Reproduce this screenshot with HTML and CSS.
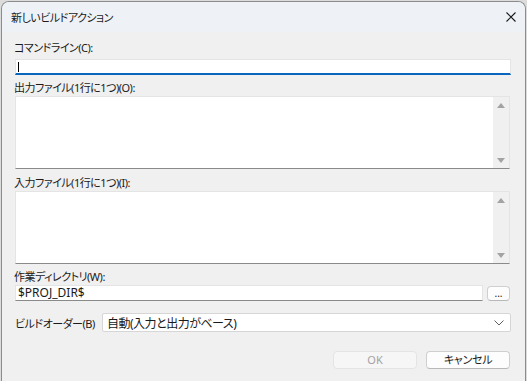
FILE: index.html
```html
<!DOCTYPE html>
<html lang="ja">
<head>
    <meta charset="UTF-8">
    <title>新しいビルドアクション</title>
    <link rel="stylesheet" href="styles.css">
</head>
<body>
    <div class="window">
        <div class="titlebar">
            <span class="title">新しいビルドアクション</span>
            <svg class="close" width="10" height="10" viewBox="0 0 10 10">
                <path d="M0.5 0.5 L9.5 9.5 M9.5 0.5 L0.5 9.5" stroke="#1a1a1a" stroke-width="1.1" fill="none"/>
            </svg>
        </div>

        <div class="form">
            <label class="lbl lbl-cmd">コマンドライン(C):</label>
            <div class="field focused"><span class="caret"></span></div>

            <label class="lbl lbl-out">出力ファイル(1行に1つ)(O):</label>
            <div class="area">
                <div class="scroll">
                    <span class="arrow up"></span>
                    <span class="arrow down"></span>
                </div>
            </div>

            <label class="lbl lbl-in">入力ファイル(1行に1つ)(I):</label>
            <div class="area">
                <div class="scroll">
                    <span class="arrow up"></span>
                    <span class="arrow down"></span>
                </div>
            </div>

            <label class="lbl lbl-dir">作業ディレクトリ(W):</label>
            <div class="dir-row">
                <div class="field dir">$PROJ_DIR$</div>
                <button class="btn browse">...</button>
            </div>

            <div class="order-row">
                <span class="order-lbl">ビルドオーダー(B)</span>
                <div class="select">
                    <span>自動(入力と出力がベース)</span>
                    <svg width="10" height="6" viewBox="0 0 10 6">
                        <path d="M0.5 0.5 L5 5 L9.5 0.5" stroke="#606060" stroke-width="1" fill="none"/>
                    </svg>
                </div>
            </div>

            <div class="buttons">
                <button class="btn ok" disabled>OK</button>
                <button class="btn cancel">キャンセル</button>
            </div>
        </div>
    </div>
</body>
</html>
```

FILE: styles.css
```css
html, body {
    margin: 0;
    height: 100%;
}
body {
    background: #dcdcdc;
    font-family: "Noto Sans", "Noto Sans CJK JP", sans-serif;
    font-size: 11px;
    font-feature-settings: "palt";
    color: #1a1a1a;
    overflow: hidden;
}
.window {
    margin: 1px 1px 0 1px;
    height: 380px;
    box-sizing: border-box;
    border: 1px solid #8c8c8c;
    border-bottom: none;
    border-radius: 8px 8px 0 0;
    background: #f0f0f0;
    overflow: hidden;
}
.titlebar {
    height: 30px;
    background: #eef2f7;
    display: flex;
    align-items: center;
    justify-content: space-between;
    padding: 0 9px 0 9px;
}
.title {
    font-size: 11px;
    letter-spacing: -0.5px;
}
.form {
    display: flex;
    flex-direction: column;
    padding: 0 14px 0 12px;
}
.lbl {
    line-height: 16px;
    height: 16px;
    white-space: nowrap;
    letter-spacing: -0.5px;
}
.lbl-cmd {
    margin-top: 8px;
    margin-bottom: 3px;
}
.lbl-out {
    margin-top: 5px;
}
.lbl-in {
    margin-top: 6px;
}
.lbl-dir {
    margin-top: 5px;
}
.field {
    height: 16px;
    box-sizing: border-box;
    background: #fff;
    border: 1px solid #e4e4e4;
    border-bottom: 1px solid #8a8a8a;
    margin-left: 1px;
    line-height: 14px;
    padding-left: 2px;
    font-size: 12px;
}
.field.focused {
    border-bottom: 2px solid #0a66bd;
    position: relative;
}
.caret {
    position: absolute;
    left: 2px;
    top: 2px;
    width: 1px;
    height: 10px;
    background: #000;
}
.area {
    height: 73px;
    box-sizing: border-box;
    margin: 0 1px 0 1px;
    background: #fff;
    border: 1px solid #e4e4e4;
    border-bottom: 1px solid #8a8a8a;
    display: flex;
    justify-content: flex-end;
}
.scroll {
    width: 16px;
    background: #f0f0f0;
    display: flex;
    flex-direction: column;
    justify-content: space-between;
    align-items: center;
    padding: 6px 0 5px;
}
.arrow {
    width: 0;
    height: 0;
    border-left: 4px solid transparent;
    border-right: 4px solid transparent;
}
.arrow.up {
    border-bottom: 5px solid #a3a3a3;
}
.arrow.down {
    border-top: 5px solid #a3a3a3;
}
.dir-row {
    display: flex;
    align-items: center;
    gap: 4px;
}
.field.dir {
    flex: 1;
    padding-left: 2px;
}
.btn {
    font-family: inherit;
    font-size: 11px;
    font-feature-settings: "palt";
    background: #fdfdfd;
    border: 1px solid #cfcfcf;
    border-bottom-color: #b8b8b8;
    border-radius: 4px;
    padding: 0;
    color: #1a1a1a;
}
.browse {
    width: 23px;
    height: 15px;
    line-height: 10px;
    font-size: 10px;
    margin-right: 1px;
}
.order-row {
    display: flex;
    align-items: center;
    margin-top: 12px;
}
.order-lbl {
    width: 87px;
    padding-left: 1px;
    white-space: nowrap;
    letter-spacing: -0.5px;
}
.select {
    flex: 1;
    height: 19px;
    box-sizing: border-box;
    background: #fff;
    border: 1px solid #d6d6d6;
    border-radius: 2px;
    display: flex;
    align-items: center;
    justify-content: space-between;
    padding: 0 6px 0 4px;
    font-size: 12px;
    letter-spacing: -0.5px;
    white-space: nowrap;
}
.buttons {
    display: flex;
    justify-content: flex-end;
    gap: 9px;
    margin-top: 19px;
    padding-right: 1px;
}
.buttons .btn {
    width: 84px;
    height: 18px;
    line-height: 14px;
}
.cancel {
    letter-spacing: -0.3px;
}
.ok {
    background: #f6f6f6;
    border-color: #e4e4e4;
    color: #a2a2a2;
}
```
